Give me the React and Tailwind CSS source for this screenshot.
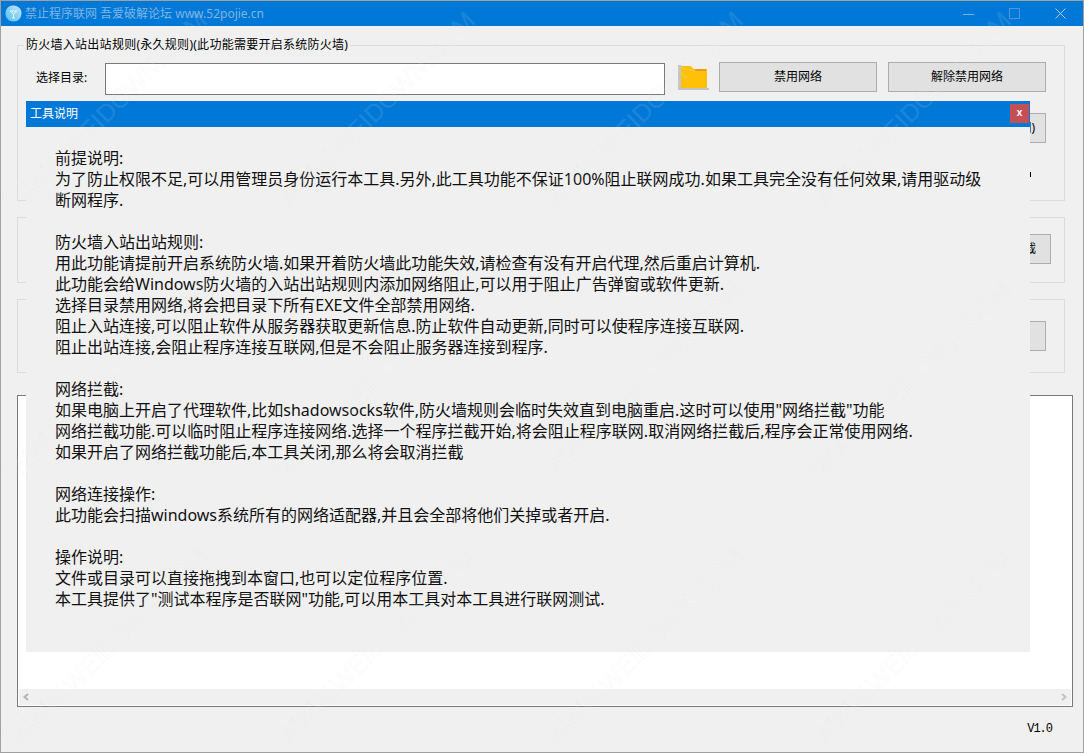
import React from 'react';

const FONT = "font-['Noto_Sans','Noto_Sans_CJK_SC',sans-serif]";

const helpLines = [
  '前提说明:',
  '为了防止权限不足,可以用管理员身份运行本工具.另外,此工具功能不保证100%阻止联网成功.如果工具完全没有任何效果,请用驱动级',
  '断网程序.',
  '',
  '防火墙入站出站规则:',
  '用此功能请提前开启系统防火墙.如果开着防火墙此功能失效,请检查有没有开启代理,然后重启计算机.',
  '此功能会给Windows防火墙的入站出站规则内添加网络阻止,可以用于阻止广告弹窗或软件更新.',
  '选择目录禁用网络,将会把目录下所有EXE文件全部禁用网络.',
  '阻止入站连接,可以阻止软件从服务器获取更新信息.防止软件自动更新,同时可以使程序连接互联网.',
  '阻止出站连接,会阻止程序连接互联网,但是不会阻止服务器连接到程序.',
  '',
  '网络拦截:',
  '如果电脑上开启了代理软件,比如shadowsocks软件,防火墙规则会临时失效直到电脑重启.这时可以使用"网络拦截"功能',
  '网络拦截功能.可以临时阻止程序连接网络.选择一个程序拦截开始,将会阻止程序联网.取消网络拦截后,程序会正常使用网络.',
  '如果开启了网络拦截功能后,本工具关闭,那么将会取消拦截',
  '',
  '网络连接操作:',
  '此功能会扫描windows系统所有的网络适配器,并且会全部将他们关掉或者开启.',
  '',
  '操作说明:',
  '文件或目录可以直接拖拽到本窗口,也可以定位程序位置.',
  '本工具提供了"测试本程序是否联网"功能,可以用本工具对本工具进行联网测试.',
];

// where each watermark's last letter ends
const marks = [
  [201, 15], [469, 15], [737, 15], [1005, 15],
  [201, 283], [469, 283], [737, 283], [1005, 283],
  [201, 551], [469, 551], [737, 551], [1005, 551],
  [201, 819], [469, 819], [737, 819], [1005, 819],
];

const Watermarks = () => (
  <div className="absolute inset-0 overflow-hidden pointer-events-none">
    {marks.map(([x, y]) => (
      <span
        key={`${x}-${y}`}
        className="absolute w-[300px] h-[30px] text-right text-[25px] leading-[30px] font-['Liberation_Sans',sans-serif] whitespace-nowrap origin-right -rotate-45 text-white/10 [-webkit-text-stroke:1px_rgba(150,150,150,0.06)]"
        style={{ left: x - 300, top: y - 15 }}
      >
        WWW.WEIDOWN.COM
      </span>
    ))}
  </div>
);

const Btn = ({ className = '', children }) => (
  <div className={`h-[30px] bg-[#e1e1e1] border border-[#adadad] flex items-center justify-center text-xs text-black ${className}`}>
    {children}
  </div>
);

const Group = ({ className = '', children }) => (
  <div className={`ml-[16px] mr-[18px] border border-[#dcdcdc] ${className}`}>{children}</div>
);

const AppIcon = () => (
  <svg width="17" height="17" viewBox="0 0 17 17" className="shrink-0">
    <defs>
      <linearGradient id="appIconFill" x1="0" y1="1" x2="1" y2="0">
        <stop offset="0" stopColor="#4fc3f0" />
        <stop offset="1" stopColor="#c4e4f7" />
      </linearGradient>
    </defs>
    <path d="M8 0.500c4 0 8.500 2.500 8.500 7.500S13 16.500 8.500 16.500 0.500 13 0.500 8.500 3.500 0.500 8 0.500z" fill="url(#appIconFill)" />
    <path d="M5 6h7M5.500 6l3 3.500L11.500 6M8.500 9.500V13M7 13h3" stroke="#fff" strokeOpacity="0.8" strokeWidth="1" fill="none" />
  </svg>
);

const WindowButtons = () => (
  <div className="flex items-center gap-[35px] pr-[17px]">
    <svg width="11" height="11" viewBox="0 0 11 11"><path d="M0 6.500h11" stroke="#7fb5e6" strokeWidth="1" /></svg>
    <svg width="11" height="11" viewBox="0 0 11 11"><rect x="0.500" y="0.500" width="10" height="10" fill="none" stroke="#4f95db" strokeWidth="1" /></svg>
    <svg width="11" height="11" viewBox="0 0 11 11"><path d="M0.500 0.500l10 10M10.500 0.500l-10 10" stroke="#a6cdf0" strokeWidth="1" /></svg>
  </div>
);

const FolderIcon = () => (
  <svg width="31" height="30" viewBox="0 0 31 30" className="shrink-0">
    <path d="M0 1h3v23h28v2H0z" fill="#c4c4c4" />
    <path d="M3 2h10l3 3h13v19H3z" fill="#ffc107" />
    <path d="M16 5h12v2H17z" fill="#f2951f" />
  </svg>
);

const HelpPanel = () => (
  <div className="absolute left-[25px] top-[100px] w-[1004px] h-[551px] bg-[#f0f0f0]">
    <div className="h-[26px] bg-[#0078d7] flex items-center justify-between pl-1 pr-px">
      <span className="text-xs text-white">工具说明</span>
      <div className="mb-px w-[19px] h-[19px] bg-[#c44f55] flex items-center justify-center text-[10px] leading-none font-bold text-white font-['Liberation_Mono',monospace]">
        x
      </div>
    </div>
    <div className="pt-[21px] pl-[29px] text-base leading-[21px] text-[#111]">
      {helpLines.map((line, i) => (
        <div key={i} className="h-[21px] whitespace-nowrap">{line}</div>
      ))}
    </div>
  </div>
);

export default function App() {
  return (
    <div className={`relative w-[1084px] h-[753px] overflow-hidden bg-[#f0f0f0] border border-[#a0a0a0] ${FONT}`}>
      <div className="h-[25px] bg-[#0078d7] flex items-center justify-between">
        <div className="flex items-center gap-[3px] pl-[4px] text-xs text-[#7fb5e6]">
          <AppIcon />
          <span>禁止程序联网 吾爱破解论坛 www.52pojie.cn</span>
        </div>
        <WindowButtons />
      </div>

      <div className="pt-[19px]">
        <Group className="relative h-[156px]">
          <span className="absolute left-[6px] -top-[9px] bg-[#f0f0f0] px-[2px] text-xs leading-[16px] tracking-[0.27px] text-black">
            防火墙入站出站规则(永久规则)(此功能需要开启系统防火墙)
          </span>
          <div className="flex items-start pt-[17px] pl-[18px]">
            <span className="w-[69px] pt-[7px] text-xs leading-[16px] text-black">选择目录:</span>
            <div className="w-[560px] h-[32px] bg-white border border-[#7a7a7a]" />
            <div className="ml-[13px] mt-[1px]"><FolderIcon /></div>
            <Btn className="-mt-px ml-[10px] w-[158px]">禁用网络</Btn>
            <Btn className="-mt-px ml-[11px] w-[158px]">解除禁用网络</Btn>
          </div>
          <div className="flex justify-end pt-[18px] pr-[18px]">
            <Btn className="w-[158px] !justify-end pr-[10px]">测试本程序是否联网)</Btn>
          </div>
          <div className="flex justify-end pt-[29px] pr-[33px]">
            <div className="w-px h-[5px] bg-black" />
          </div>
        </Group>

        <Group className="mt-[16px] h-[66px] flex items-center justify-end pr-[13px]">
          <Btn className="mb-[2px] w-[158px] !justify-end pr-[14px]">网络拦截</Btn>
        </Group>

        <Group className="mt-[16px] h-[74px] flex items-center justify-end pr-[18px]">
          <Btn className="w-[158px]" />
        </Group>

        <div className="ml-[16px] mr-[10px] mt-[22px] h-[312px] p-px bg-white border border-[#7a7a7a] flex flex-col justify-end">
          <div className="h-[16px] bg-[#f0f0f0] flex items-center justify-between px-[3px]">
            <svg width="8" height="8" viewBox="0 0 8 8"><path d="M6 1L2.500 4 6 7" stroke="#b4b4b4" strokeWidth="2" fill="none" /></svg>
            <svg width="8" height="8" viewBox="0 0 8 8"><path d="M2 1l3.500 3L2 7" stroke="#c4c4c4" strokeWidth="2" fill="none" /></svg>
          </div>
        </div>

        <div className="flex justify-end pt-[15px] pr-[31px] text-xs leading-[14px] tracking-[-1px] text-black font-['Liberation_Mono',monospace]">
          V1.0
        </div>
      </div>

      <HelpPanel />
      <Watermarks />
    </div>
  );
}
